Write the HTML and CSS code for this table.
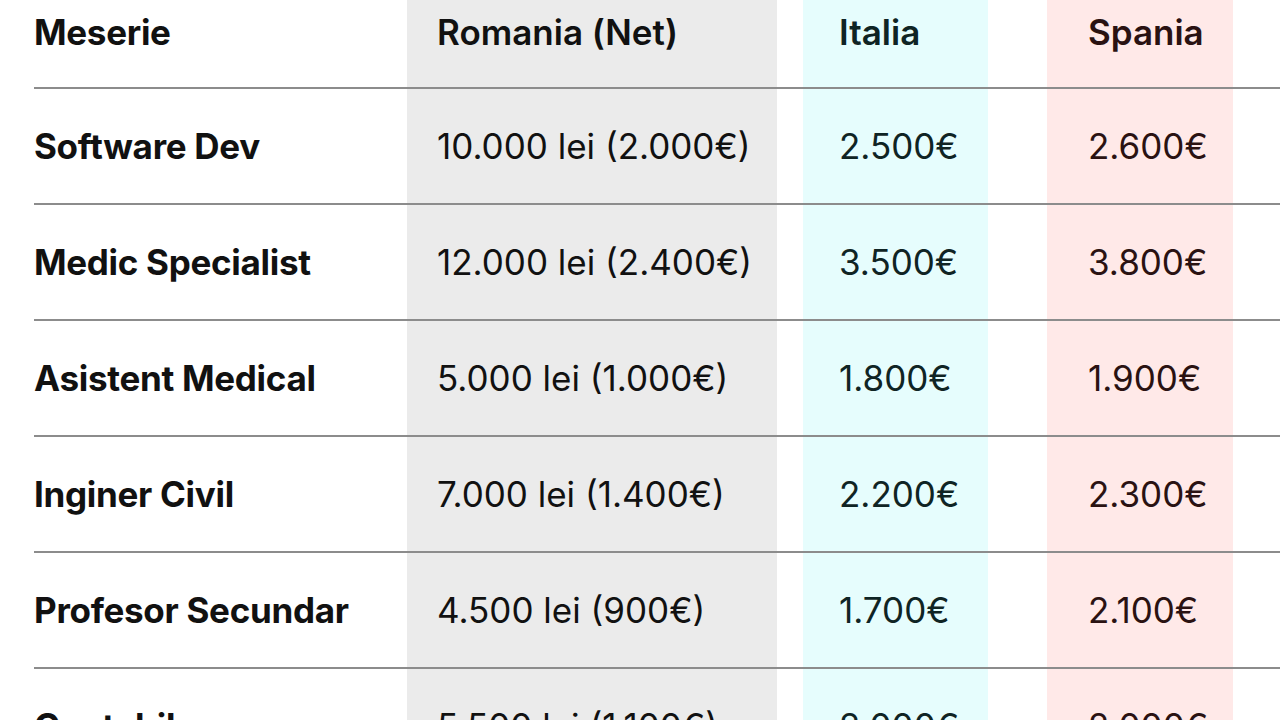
FILE: index.html
```html
<!DOCTYPE html>
<html lang="ro">
<head>
<meta charset="utf-8">
<title>Salarii</title>
<link rel="stylesheet" href="styles.css">
</head>
<body>
<div class="table">
  <div class="row head">
    <div class="cell job">Meserie</div>
    <div class="cell ro">Romania (Net)</div>
    <div class="cell it">Italia</div>
    <div class="cell es">Spania</div>
    <div class="cell rest"></div>
  </div>
  <div class="row">
    <div class="cell job">Software Dev</div>
    <div class="cell ro">10.000 lei (2.000€)</div>
    <div class="cell it">2.500€</div>
    <div class="cell es">2.600€</div>
    <div class="cell rest"></div>
  </div>
  <div class="row">
    <div class="cell job">Medic Specialist</div>
    <div class="cell ro">12.000 lei (2.400€)</div>
    <div class="cell it">3.500€</div>
    <div class="cell es">3.800€</div>
    <div class="cell rest"></div>
  </div>
  <div class="row">
    <div class="cell job">Asistent Medical</div>
    <div class="cell ro">5.000 lei (1.000€)</div>
    <div class="cell it">1.800€</div>
    <div class="cell es">1.900€</div>
    <div class="cell rest"></div>
  </div>
  <div class="row">
    <div class="cell job">Inginer Civil</div>
    <div class="cell ro">7.000 lei (1.400€)</div>
    <div class="cell it">2.200€</div>
    <div class="cell es">2.300€</div>
    <div class="cell rest"></div>
  </div>
  <div class="row">
    <div class="cell job">Profesor Secundar</div>
    <div class="cell ro">4.500 lei (900€)</div>
    <div class="cell it">1.700€</div>
    <div class="cell es">2.100€</div>
    <div class="cell rest"></div>
  </div>
  <div class="row">
    <div class="cell job">Contabil</div>
    <div class="cell ro">5.500 lei (1.100€)</div>
    <div class="cell it">2.000€</div>
    <div class="cell es">2.000€</div>
    <div class="cell rest"></div>
  </div>
</div>
</body>
</html>
```
FILE: styles.css
```css
html, body {
  margin: 0;
  padding: 0;
  background: #ffffff;
  overflow: hidden;
}
body {
  font-family: Inter, "Noto Sans", sans-serif;
  color: #111111;
  height: 720px;
}
.table {
  margin-top: -27px;
  padding-left: 34px;
}
.row {
  display: grid;
  grid-template-columns: 373px 370px 211px 245px 1fr;
  border-bottom: 2px solid #8c8c8c;
  height: 114px;
}
.cell {
  display: flex;
  align-items: center;
  font-size: 35px;
  font-weight: 400;
  letter-spacing: 0;
  white-space: nowrap;
}
.job {
  font-weight: 700;
  letter-spacing: -0.3px;
}
.head .cell {
  font-weight: 600;
  padding-top: 4px;
}
.head .job {
  font-weight: 700;
}
.ro {
  background: #ebebeb;
  padding-left: 30px;
}
.it {
  background: #e6fdfd;
  margin-left: 26px;
  padding-left: 36px;
  color: #0f2424;
}
.es {
  background: #ffe9e8;
  margin-left: 59px;
  padding-left: 41px;
  color: #2a1212;
}
```
